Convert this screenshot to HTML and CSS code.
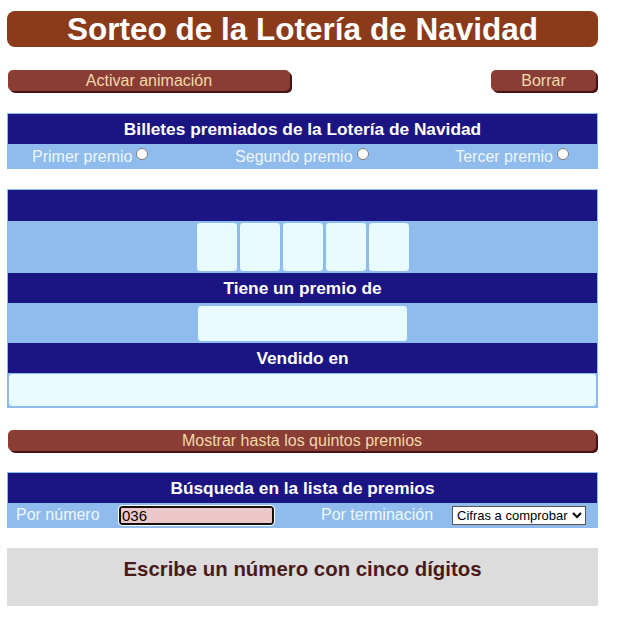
FILE: index.html
```html
<!DOCTYPE html>
<html lang="es">
<head>
<meta charset="utf-8">
<title>Sorteo de la Lotería de Navidad</title>
<link rel="stylesheet" href="styles.css">
</head>
<body>
<div class="page">
  <h1 class="title">Sorteo de la Lotería de Navidad</h1>

  <div class="btn-row">
    <button class="btn btn-anim">Activar animación</button>
    <button class="btn btn-clear">Borrar</button>
  </div>

  <section class="panel panel-prizes">
    <div class="head">Billetes premiados de la Lotería de Navidad</div>
    <div class="radios">
      <label class="radio">Primer premio <input type="radio" name="premio"></label>
      <label class="radio">Segundo premio <input type="radio" name="premio"></label>
      <label class="radio">Tercer premio <input type="radio" name="premio"></label>
    </div>
  </section>

  <section class="panel panel-result">
    <div class="head head-empty"></div>
    <div class="light digits-row">
      <div class="digits">
        <div class="digit"></div>
        <div class="digit"></div>
        <div class="digit"></div>
        <div class="digit"></div>
        <div class="digit"></div>
      </div>
    </div>
    <div class="head">Tiene un premio de</div>
    <div class="light prize-row">
      <div class="prize-box"></div>
    </div>
    <div class="head">Vendido en</div>
    <div class="place-box"></div>
  </section>

  <button class="btn btn-wide">Mostrar hasta los quintos premios</button>

  <section class="panel panel-search">
    <div class="head">Búsqueda en la lista de premios</div>
    <div class="search-row">
      <span class="lbl lbl-num">Por número</span>
      <input class="num-input" type="text" value="036">
      <span class="lbl lbl-term">Por terminación</span>
      <select class="term-select">
        <option>Cifras a comprobar</option>
      </select>
    </div>
  </section>

  <div class="message">Escribe un número con cinco dígitos</div>
</div>
</body>
</html>
```

FILE: styles.css
```css
html, body {
  margin: 0;
  padding: 0;
  background: #ffffff;
}

body {
  font-family: "Liberation Sans", Arial, sans-serif;
}

.page {
  width: 591px;
  margin-left: 7px;
  display: flex;
  flex-direction: column;
}

.title {
  margin: 11px 0 0 0;
  height: 36px;
  line-height: 36px;
  background: #8b3a1a;
  color: #ffffff;
  font-size: 31.5px;
  font-weight: bold;
  text-align: center;
  border-radius: 8px;
}

.btn {
  font-family: "Liberation Sans", Arial, sans-serif;
  font-size: 16px;
  color: #f2d9a8;
  background: #893d35;
  border: none;
  border-radius: 5px;
  box-shadow: 2px 2px 0 #45141a;
  height: 21px;
  padding: 0;
  line-height: 19px;
  text-align: center;
}

.btn-row {
  display: flex;
  justify-content: space-between;
  margin-top: 23px;
  padding-left: 1px;
  padding-right: 2px;
}

.btn-anim {
  width: 282px;
}

.btn-clear {
  width: 105px;
}

.btn-wide {
  margin: 22px 2px 0 1px;
  width: 588px;
}

.panel {
  border: 1px solid #8ebbeb;
  background: #8fbcec;
}

.panel-prizes {
  margin-top: 22px;
}

.panel-result {
  margin-top: 20px;
}

.panel-search {
  margin-top: 21px;
}

.head {
  background: #1b1583;
  color: #ffffff;
  font-weight: bold;
  font-size: 17.3px;
  height: 30px;
  line-height: 30px;
  text-align: center;
}

.head-empty {
  height: 31px;
}

.radios {
  height: 24px;
  box-sizing: border-box;
  padding: 2px 28px 0 24px;
  display: flex;
  justify-content: space-between;
  align-items: center;
  color: #eef6ff;
  font-size: 16px;
}

.radio {
  display: flex;
  align-items: center;
  gap: 4px;
}

.radio input {
  margin: 0;
  width: 12px;
  height: 12px;
  position: relative;
  top: -3px;
}

.light {
  display: flex;
  justify-content: center;
}

.digits-row {
  height: 52px;
  align-items: center;
}

.digits {
  display: flex;
  gap: 1px;
}

.digit {
  width: 40px;
  height: 48px;
  background: #e8fbff;
  border: 1px solid #8ebbeb;
  border-radius: 4px;
}

.prize-row {
  height: 40px;
  align-items: center;
}

.prize-box {
  width: 209px;
  height: 35px;
  background: #e8fbff;
  border: 1px solid #8ebbeb;
  border-radius: 4px;
}

.place-box {
  height: 32px;
  background: #e8fbff;
  border: 1px solid #8ebbeb;
  border-radius: 4px;
}

.search-row {
  height: 24px;
  display: flex;
  align-items: center;
  color: #eef6ff;
  font-size: 16px;
}

.lbl-num {
  margin-left: 8px;
  width: 103px;
}

.num-input {
  width: 150px;
  height: 15px;
  margin: 0;
  padding: 0 0 0 1px;
  border: 2px solid #111111;
  border-radius: 3px;
  outline: 1px solid #ffffff;
  background: #ecc8c9;
  font-family: "Liberation Sans", Arial, sans-serif;
  font-size: 15px;
  color: #000000;
}

.lbl-term {
  margin-left: 47px;
  width: 131px;
}

.term-select {
  width: 134px;
  height: 19px;
  margin: 0;
  font-family: "Liberation Sans", Arial, sans-serif;
  font-size: 13px;
  background: #ffffff;
  color: #000000;
  border: 1px solid #555555;
  border-radius: 0;
}

.message {
  margin-top: 20px;
  height: 58px;
  background: #dcdcdc;
  color: #4a1a1a;
  font-size: 20.4px;
  font-weight: bold;
  text-align: center;
  padding-top: 10px;
  box-sizing: border-box;
}
```
